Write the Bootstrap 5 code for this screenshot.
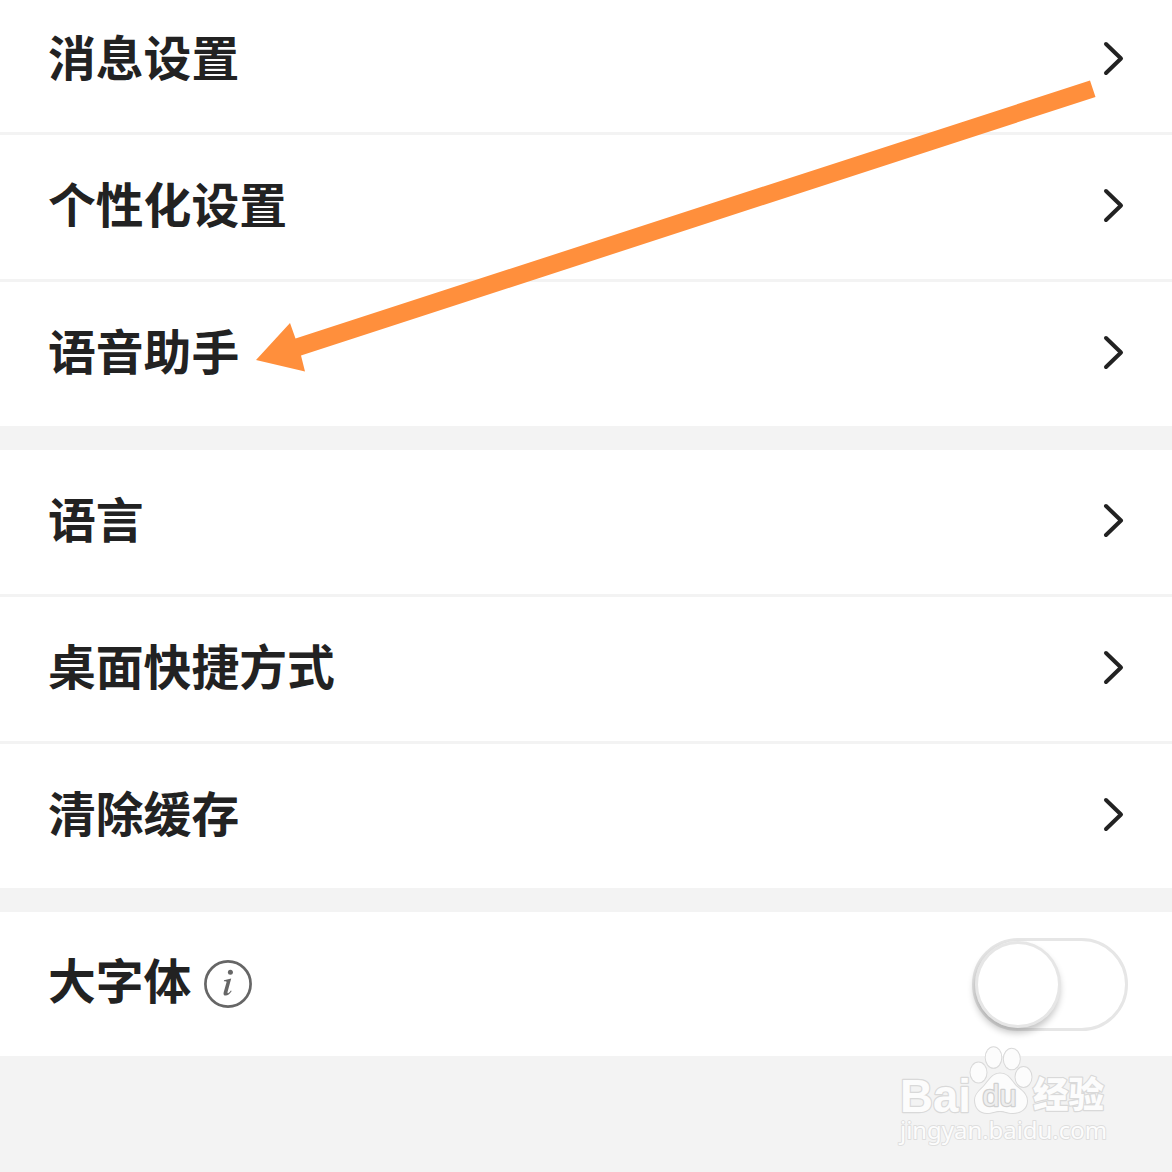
<!DOCTYPE html>
<html lang="zh-CN">
<head>
<meta charset="utf-8">
<meta name="viewport" content="width=device-width, initial-scale=1">
<title>设置</title>
<link href="https://cdn.jsdelivr.net/npm/bootstrap@5.3.0/dist/css/bootstrap.min.css" rel="stylesheet">
<style>
body{background:#f3f3f3;color:#222;font-family:"Noto Sans CJK SC",sans-serif;overflow:hidden}
.screen{height:1172px}
.settings-group{margin-bottom:24px;border-radius:0}
.settings-group .list-group-item{height:147px;padding:0 47px 3px 48px;border:0;border-top:3px solid #f3f3f3;color:#222;background:#fff;font-size:47.8px;font-weight:700;line-height:70px}
.settings-group .list-group-item:first-child{height:144px;border-top:0}
.settings-group .list-group-item.cut-row{height:132px;padding-bottom:15px}
.settings-group .list-group-item.switch-row{padding:0 44px 0 48px}
.label-text{display:block;padding-bottom:5px}
.switch-row .label-text{padding-bottom:10px}
.chevron{width:22px;height:36px;fill:none;stroke:#222;stroke-width:4;stroke-linecap:round;stroke-linejoin:round}
.info-icon{width:48px;height:48px;margin-left:12.5px}
.toggle{width:156px;height:93px;border:3px solid #e6e6e6;border-radius:47px;background:#fff}
.knob{width:86px;height:87px;border:3px solid #e6e6e6;border-radius:50%;background:#fff;box-shadow:-1px 5px 7px rgba(0,0,0,.23)}
.pointer-arrow{z-index:5;pointer-events:none}
.watermark{left:890px;top:1040px;z-index:6}
</style>
<script src="https://cdn.jsdelivr.net/npm/bootstrap@5.3.0/dist/js/bootstrap.bundle.min.js"></script>
</head>
<body>
<svg class="d-none"><symbol id="chev" viewBox="0 0 22 36"><path d="M3 3 18 17.5 3 32"/></symbol></svg>
<main class="screen position-relative overflow-hidden">
<div class="list-group list-group-flush settings-group">
<div class="list-group-item cut-row d-flex align-items-center justify-content-between"><span class="label-text">消息设置</span><svg class="chevron"><use href="#chev"/></svg></div>
<div class="list-group-item d-flex align-items-center justify-content-between"><span class="label-text">个性化设置</span><svg class="chevron"><use href="#chev"/></svg></div>
<div class="list-group-item d-flex align-items-center justify-content-between"><span class="label-text">语音助手</span><svg class="chevron"><use href="#chev"/></svg></div>
</div>
<div class="list-group list-group-flush settings-group">
<div class="list-group-item d-flex align-items-center justify-content-between"><span class="label-text">语言</span><svg class="chevron"><use href="#chev"/></svg></div>
<div class="list-group-item d-flex align-items-center justify-content-between"><span class="label-text">桌面快捷方式</span><svg class="chevron"><use href="#chev"/></svg></div>
<div class="list-group-item d-flex align-items-center justify-content-between"><span class="label-text">清除缓存</span><svg class="chevron"><use href="#chev"/></svg></div>
</div>
<div class="list-group list-group-flush settings-group">
<div class="list-group-item switch-row d-flex align-items-center justify-content-between">
<div class="d-flex align-items-center"><span class="label-text">大字体</span>
<svg class="info-icon" viewBox="0 0 48 48"><circle cx="24" cy="24" r="22.6" fill="none" stroke="#666" stroke-width="2.7"/><circle cx="26.4" cy="12.3" r="2.5" fill="#666"/><path d="M20 20.2 27.2 18.6 23.6 31.8Q23.1 33.8 24.5 33 25.8 32 26.9 30.4L27.7 31Q24.7 35.6 21.6 35.6 18.9 35.6 19.7 32.2L22.6 21.9Q22.8 21 19.9 21.3Z" fill="#666"/></svg></div>
<div class="toggle"><div class="knob"></div></div>
</div>
</div>
<svg class="pointer-arrow position-absolute top-0 start-0" width="1172" height="1172"><path d="M256 360 290 323 295.5 338.5 1090 80.5 1095.5 97 301 355.5 305 371.5Z" fill="#ff8f3c"/></svg>
<svg class="watermark position-absolute" width="230" height="115" fill="#fcfcfc" stroke="#d9d9d9" stroke-width="2.4" paint-order="stroke" stroke-linejoin="round">
<text x="10" y="72" font-family="Liberation Sans" font-weight="700" font-size="47" textLength="71" lengthAdjust="spacingAndGlyphs">Bai</text>
<g stroke-width="2"><ellipse cx="88.5" cy="32.5" rx="8" ry="10"/><ellipse cx="103.5" cy="17.5" rx="7.8" ry="10.3"/><ellipse cx="121.8" cy="19" rx="8" ry="10.3"/><ellipse cx="133.5" cy="37" rx="8" ry="10"/>
<path d="M110 33.5C118 33.5 121 40 126 46 132 51 137 54 137 61 137 69 130 73 123 73 116 73 116 71 110 71 104 71 103 73 97 73 90 73 85 68 85 60 85 53 91 50 95 45 100 39 103 33.5 110 33.5Z"/></g>
<text x="92.5" y="66" font-family="Liberation Sans" font-weight="400" font-size="29" textLength="34" lengthAdjust="spacingAndGlyphs" fill="#eee" stroke="#d0d0d0" stroke-width="2.4">du</text>
<text x="143" y="68" font-family="Noto Sans CJK SC" font-weight="900" font-size="36" textLength="71" lengthAdjust="spacingAndGlyphs">经验</text>
<text x="10" y="99" font-family="Noto Sans" font-weight="400" font-size="23" textLength="207" lengthAdjust="spacingAndGlyphs" stroke="#dedede" stroke-width="1.8">jingyan.baidu.com</text>
</svg>
</main>
</body>
</html>
